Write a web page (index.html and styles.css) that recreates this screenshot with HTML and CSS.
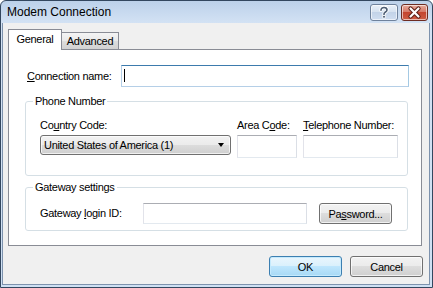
FILE: index.html
```html
<!DOCTYPE html>
<html lang="en">
<head>
    <meta charset="UTF-8">
    <title>Modem Connection</title>
    <link rel="stylesheet" href="styles.css">
</head>
<body>
    <div class="window">
        <div class="titlebar">
            <span class="title">Modem Connection</span>
            <div class="caption-buttons">
                <span class="cap-btn help">
                    <svg width="26" height="15" viewBox="0 0 26 15">
                        <path d="M10 5.2 C10 3.2 11.5 2.5 13 2.5 C14.8 2.5 16 3.4 16 4.9 C16 6.4 14.6 6.9 13.6 7.6 C13 8 13 8.6 13 9.5" fill="none" stroke="#fff" stroke-width="3.4" stroke-linecap="round"/>
                        <path d="M10 5.2 C10 3.2 11.5 2.5 13 2.5 C14.8 2.5 16 3.4 16 4.9 C16 6.4 14.6 6.9 13.6 7.6 C13 8 13 8.6 13 9.5" fill="none" stroke="#4d5d73" stroke-width="1.6" stroke-linecap="round"/>
                        <rect x="11.7" y="10.6" width="2.6" height="2.4" fill="#4d5d73" stroke="#fff" stroke-width="0.8"/>
                    </svg>
                </span>
                <span class="cap-btn close">
                    <svg width="25" height="15" viewBox="0 0 25 15">
                        <path d="M8.5 3.5 L16.5 11.5 M16.5 3.5 L8.5 11.5" stroke="#5b1d14" stroke-width="4.2" stroke-linecap="round"/>
                        <path d="M8.5 3.5 L16.5 11.5 M16.5 3.5 L8.5 11.5" stroke="#fff" stroke-width="2.2" stroke-linecap="round"/>
                    </svg>
                </span>
            </div>
        </div>

        <div class="client">
            <div class="tabs">
                <span class="tab active">General</span>
                <span class="tab">Advanced</span>
            </div>

            <div class="panel">
                <div class="name-row">
                    <label class="name-label"><u>C</u>onnection name:</label>
                    <div class="textbox focused"></div>
                </div>

                <!-- Phone Number -->
                <fieldset class="group">
                    <legend>Phone Number</legend>
                    <div class="phone-fields">
                        <div class="field country">
                            <label>Co<u>u</u>ntry Code:</label>
                            <div class="combo">
                                <span>United States of America (1)</span>
                                <span class="arrow"></span>
                            </div>
                        </div>
                        <div class="field area">
                            <label>Area C<u>o</u>de:</label>
                            <div class="textbox tall"></div>
                        </div>
                        <div class="field number">
                            <label><u>T</u>elephone Number:</label>
                            <div class="textbox tall"></div>
                        </div>
                    </div>
                </fieldset>

                <!-- Gateway settings -->
                <fieldset class="group gateway">
                    <legend>Gateway settings</legend>
                    <div class="gateway-row">
                        <label class="login-label">Gateway <u>l</u>ogin ID:</label>
                        <div class="textbox login"></div>
                        <button class="btn password">Pa<u>s</u>sword...</button>
                    </div>
                </fieldset>
            </div>

            <div class="dialog-buttons">
                <button class="btn default">OK</button>
                <button class="btn">Cancel</button>
            </div>
        </div>
    </div>
</body>
</html>
```

FILE: styles.css
```css
* {
    margin: 0;
    padding: 0;
    box-sizing: border-box;
}

body {
    font-family: "Liberation Sans", Arial, sans-serif;
    font-size: 11px;
    color: #000;
    background: #fff;
}

u {
    text-decoration: underline;
    text-underline-offset: 1px;
}

/* Window frame */
.window {
    width: 433px;
    height: 288px;
    border: 1px solid #33475f;
    border-radius: 6px 6px 0 0;
    background: linear-gradient(to bottom, #bcd1ea 0, #d3e2f4 22px, #cfe0f3 100%);
    display: flex;
    flex-direction: column;
    overflow: hidden;
}

.titlebar {
    height: 22px;
    flex: none;
    display: flex;
    justify-content: space-between;
    align-items: center;
    padding: 0 4px 0 6px;
}

.title {
    font-size: 12px;
    color: #000;
}

.caption-buttons {
    display: flex;
    gap: 3px;
    align-self: flex-start;
    margin-top: 3px;
}

.cap-btn {
    display: flex;
    width: 28px;
    height: 17px;
    border: 1px solid #6f829c;
    border-radius: 3px;
    box-shadow: inset 0 0 0 1px rgba(255,255,255,0.6);
}

.cap-btn.help {
    background: linear-gradient(to bottom, #eaf1fa 0%, #d6e2f0 45%, #c3d3e8 50%, #d0def0 100%);
}

.cap-btn.close {
    width: 27px;
    border-color: #6d2c22;
    background: linear-gradient(to bottom, #e8ab9d 0%, #d57a69 45%, #c4452f 50%, #cd5d45 100%);
}

/* Client area */
.client {
    flex: 1;
    margin: 0 2px 2px 1px;
    border: 1px solid #7d92ad;
    border-top: none;
    background: #f0f0f0;
    padding: 6px 7px 6px 5px;
    display: flex;
    flex-direction: column;
}

/* Tabs */
.tabs {
    display: flex;
    align-items: flex-end;
    height: 21px;
    margin-bottom: -1px;
    position: relative;
    z-index: 1;
}

.tab {
    height: 17px;
    width: 57px;
    margin-bottom: 1px;
    padding-top: 2px;
    line-height: 13px;
    text-align: center;
    letter-spacing: -0.3px;
    border: 1px solid #898c95;
    border-bottom: none;
    border-left: none;
    background: linear-gradient(to bottom, #f4f4f4 0%, #e9e9e9 50%, #dddddd 51%, #d2d2d2 100%);
}

.tab.active {
    height: 21px;
    width: 54px;
    margin-bottom: 0;
    padding-top: 3px;
    border-left: 1px solid #898c95;
    background: #fff;
}

.panel {
    flex: none;
    height: 197px;
    border: 1px solid #898c95;
    background: #fff;
    padding: 15px 13px 0 16px;
}

label {
    line-height: 13px;
    letter-spacing: -0.3px;
    white-space: nowrap;
}

.name-row {
    display: flex;
    align-items: center;
    padding-left: 2px;
}

.name-label {
    width: 94px;
    flex: none;
}

.textbox {
    height: 22px;
    background: #fff;
    border: 1px solid;
    border-color: #abadb3 #dbdfe6 #e3e9ef #e2e3ea;
}

.name-row .textbox {
    flex: 1;
    margin-right: -1px;
}

.textbox.focused {
    border-color: #3d7bad #a4c9e3 #b5cfe7 #b5cfe7;
}

.textbox.focused::before {
    content: "";
    display: block;
    width: 1px;
    height: 13px;
    margin: 3px 0 0 2px;
    background: #000;
}

/* Group boxes */
.group {
    margin-top: 8px;
    padding: 11px 0 17px 14px;
    border: 1px solid #d5dfe5;
    border-radius: 3px;
    min-width: 0;
}

.group legend {
    margin-left: -7px;
    padding: 0 2px;
    line-height: 13px;
    letter-spacing: -0.3px;
}

.group.gateway {
    margin-top: 5px;
    padding: 9px 0 6px 14px;
}

.phone-fields {
    display: flex;
    align-items: flex-start;
    gap: 6px;
}

.field {
    display: flex;
    flex-direction: column;
    gap: 3px;
}

.field.country { width: 191px; }
.field.area { width: 60px; }
.field.number { width: 95px; }

.textbox.tall {
    height: 23px;
}

.combo {
    height: 20px;
    display: flex;
    align-items: center;
    padding-left: 3px;
    letter-spacing: -0.3px;
    border: 1px solid #707070;
    border-radius: 3px;
    background: linear-gradient(to bottom, #f2f2f2 0%, #ebebeb 50%, #dddddd 50%, #cfcfcf 100%);
    box-shadow: inset 0 0 0 1px rgba(255,255,255,0.7);
}

.combo .arrow {
    width: 1px;
    height: 0;
    margin-left: auto;
    margin-right: 6px;
    border-top: 4px solid #000;
    border-left: 3px solid transparent;
    border-right: 3px solid transparent;
}

.gateway-row {
    display: flex;
    align-items: center;
}

.login-label {
    width: 103px;
    flex: none;
}

.textbox.login {
    width: 164px;
    height: 21px;
}

/* Buttons */
.btn {
    width: 73px;
    height: 21px;
    font-family: inherit;
    font-size: 11px;
    letter-spacing: -0.3px;
    color: #000;
    border: 1px solid #707070;
    border-radius: 3px;
    background: linear-gradient(to bottom, #f2f2f2 0%, #ebebeb 50%, #dddddd 50%, #cfcfcf 100%);
    box-shadow: inset 0 0 0 1px rgba(255,255,255,0.7);
}

.btn.password {
    margin-left: 12px;
}

.btn.default {
    border-color: #3c7fb1;
    background: linear-gradient(to bottom, #eaf6fd 0%, #d9f0fc 50%, #bee6fd 50%, #a7d9f5 100%);
    box-shadow: inset 0 0 0 1px #c5eafd;
}

.dialog-buttons {
    display: flex;
    justify-content: flex-end;
    gap: 8px;
    margin-top: 10px;
    margin-right: -1px;
}
```
